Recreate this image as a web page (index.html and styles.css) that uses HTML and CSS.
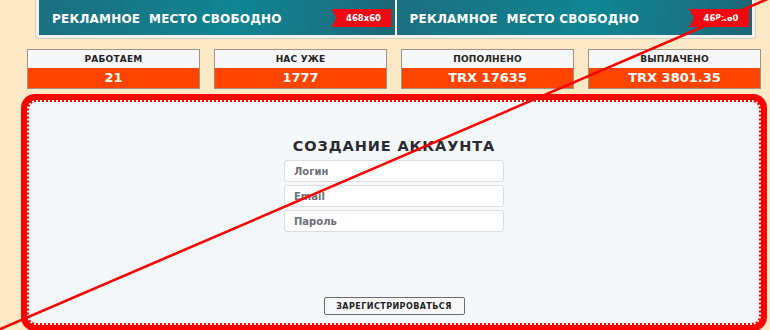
FILE: index.html
```html
<!DOCTYPE html>
<html lang="ru">
<head>
<meta charset="utf-8">
<title>Регистрация</title>
<link rel="stylesheet" href="styles.css">
</head>
<body>
<div class="page">
  <div class="ads">
    <div class="ad">
      <span class="ad-text">РЕКЛАМНОЕ&nbsp; МЕСТО СВОБОДНО</span>
      <span class="ad-tag">468x60</span>
    </div>
    <div class="ad">
      <span class="ad-text">РЕКЛАМНОЕ&nbsp; МЕСТО СВОБОДНО</span>
      <span class="ad-tag">468x60</span>
    </div>
  </div>

  <div class="stats">
    <div class="stat"><div class="stat-label">РАБОТАЕМ</div><div class="stat-value">21</div></div>
    <div class="stat"><div class="stat-label">НАС УЖЕ</div><div class="stat-value">1777</div></div>
    <div class="stat"><div class="stat-label">ПОПОЛНЕНО</div><div class="stat-value">TRX 17635</div></div>
    <div class="stat"><div class="stat-label">ВЫПЛАЧЕНО</div><div class="stat-value">TRX 3801.35</div></div>
  </div>

  <div class="frame">
    <form class="form">
      <h1 class="title">СОЗДАНИЕ АККАУНТА</h1>
      <input class="field" type="text" placeholder="Логин">
      <input class="field" type="text" placeholder="Email">
      <input class="field" type="password" placeholder="Пароль">
      <button class="submit" type="button">ЗАРЕГИСТРИРОВАТЬСЯ</button>
    </form>
  </div>
</div>
<svg class="strike" width="770" height="330" viewBox="0 0 770 330">
  <line x1="-2" y1="330" x2="770" y2="-2" stroke="#ff0000" stroke-width="2.6"/>
</svg>
</body>
</html>
```

FILE: styles.css
```css
html, body {
  margin: 0;
  padding: 0;
}
body {
  background: #fde9c6;
  font-family: "DejaVu Sans", "Liberation Sans", sans-serif;
  width: 770px;
  height: 330px;
  overflow: hidden;
  position: relative;
}
.page {
  display: flex;
  flex-direction: column;
}
.ads {
  margin-left: 35px;
  width: 721px;
  box-sizing: border-box;
  display: flex;
  gap: 2px;
  padding: 0 3px 3px 3px;
  background: #f3f1ec;
  border: 1px solid #d4cfc4;
  border-top: none;
  border-radius: 0 0 3px 3px;
}
.ad {
  flex: 1;
  height: 35px;
  display: flex;
  align-items: center;
  justify-content: space-between;
  padding: 0 0 0 13px;
  background: linear-gradient(100deg, #1c6f80 0%, #157c8b 35%, #0f8593 55%, #197585 80%, #1a6676 100%);
  color: #fff;
}
.ad-text {
  font-weight: bold;
  font-size: 12px;
  letter-spacing: 0.2px;
  margin-top: 2px;
}
.ad-tag {
  margin-right: 3px;
  margin-top: 1px;
  width: 60px;
  height: 18px;
  box-sizing: border-box;
  background: #ee0a12;
  color: #fff;
  font-weight: bold;
  font-size: 8.5px;
  display: flex;
  align-items: center;
  justify-content: center;
  padding-left: 4px;
  clip-path: polygon(0 0, 100% 0, 100% 100%, 0 100%, 5px 50%);
}
.stats {
  margin: 10px 0 0 27px;
  display: flex;
  gap: 14px;
}
.stat {
  width: 173px;
  box-sizing: border-box;
  border: 1px solid #9d9486;
  text-align: center;
}
.stat-label {
  height: 18px;
  line-height: 19px;
  background: #f6f7f8;
  color: #222;
  font-weight: bold;
  font-size: 9px;
  letter-spacing: 0.2px;
}
.stat-value {
  height: 20px;
  line-height: 20px;
  background: #ff4400;
  color: #fff;
  font-weight: bold;
  font-size: 13px;
}
.frame {
  margin: 5px 0 0 21px;
  width: 746px;
  height: 237px;
  box-sizing: border-box;
  background: #ff0000;
  border-radius: 14px;
  padding: 6px;
}
.form {
  height: 100%;
  box-sizing: border-box;
  margin: 0;
  border: 2px dotted #ffffff;
  border-radius: 9px;
  background: #f5f8fa;
  background-clip: padding-box;
  display: flex;
  flex-direction: column;
  align-items: center;
  padding: 34px 0 8px 0;
}
.title {
  margin: 0 0 4px 0;
  font-size: 14.5px;
  line-height: 20px;
  font-weight: bold;
  color: #2a2a33;
  letter-spacing: 0.9px;
}
.field {
  width: 220px;
  height: 22px;
  box-sizing: border-box;
  margin: 0 0 3px 0;
  border: 1px solid #dcdfe3;
  border-radius: 3px;
  background: #fff;
  padding: 0 0 0 9px;
  font-family: "DejaVu Sans", "Liberation Sans", sans-serif;
  font-size: 10px;
  font-weight: bold;
  outline: none;
}
.field::placeholder {
  color: #6e6e74;
  opacity: 1;
}
.submit {
  margin-top: auto;
  width: 141px;
  height: 18px;
  box-sizing: border-box;
  padding: 0;
  border: 1px solid #6b6b6b;
  border-radius: 2px;
  background: #f8f8f8;
  color: #222;
  font-family: "DejaVu Sans", "Liberation Sans", sans-serif;
  font-weight: bold;
  font-size: 8px;
  letter-spacing: 0.45px;
}
.strike {
  position: absolute;
  left: 0;
  top: 0;
  pointer-events: none;
}
```
